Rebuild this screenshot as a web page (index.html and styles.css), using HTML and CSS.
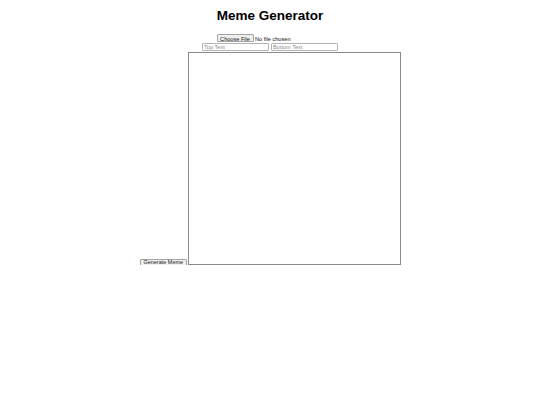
FILE: index.html
```html
<!DOCTYPE html>
<html lang="en">
<head>
<meta charset="utf-8">
<title>Meme Generator</title>
<link rel="stylesheet" href="styles.css">
</head>
<body class="app">
  <h1 class="title">Meme Generator</h1>
  <div class="row upload-row">
    <input type="file" class="file-input" accept="image/*">
  </div>
  <div class="row text-row">
    <input type="text" class="caption" placeholder="Top Text">
    <input type="text" class="caption" placeholder="Bottom Text">
  </div>
  <div class="row canvas-row">
    <button class="generate" type="button">Generate Meme</button>
    <canvas class="meme-canvas" width="211" height="211"></canvas>
  </div>
</body>
</html>
```
FILE: styles.css
```css
.app {
  margin: 0;
  font-family: "Liberation Sans", Arial, sans-serif;
  color: #000;
  background: #fff;
  display: flex;
  flex-direction: column;
  align-items: center;
}

.title {
  font-size: 13.5px;
  line-height: 16px;
  font-weight: bold;
  margin: 8.3px 0 0;
}

.row {
  display: flex;
  justify-content: center;
}

/* file picker */
.upload-row {
  margin-top: 9.7px;
  width: 106px;
  margin-left: -1px;
}

.file-input {
  font-family: "Liberation Sans", Arial, sans-serif;
  font-size: 5.6px;
  width: 106px;
  height: 8.3px;
  padding: 0;
  margin: 0;
  color: #111;
  line-height: 8.3px;
}

.file-input::file-selector-button {
  font: inherit;
  box-sizing: border-box;
  height: 8.3px;
  padding: 0 2.6px;
  margin: 0 1.5px 0 0;
  border: 1px solid #a4a4a4;
  border-radius: 1px;
  background: #efefef;
  color: #222;
}

/* caption inputs */
.text-row {
  margin-top: 0.3px;
  gap: 2px;
}

.caption {
  box-sizing: border-box;
  width: 67px;
  height: 8.6px;
  margin: 0;
  padding: 0 1px;
  border: 1px solid #b4b4b4;
  border-radius: 1px;
  font-family: "Liberation Sans", Arial, sans-serif;
  font-size: 5.6px;
  background: #fff;
}

.caption::placeholder {
  color: #8a8a8a;
}

/* generate button sits on the canvas baseline */
.canvas-row {
  margin-top: 0.6px;
  align-items: flex-end;
  gap: 1.5px;
  margin-left: 1px;
}

.generate {
  box-sizing: border-box;
  width: 46.5px;
  height: 7.6px;
  margin: 0 0 -1.8px;
  padding: 0;
  border: 1px solid #a4a4a4;
  border-radius: 1px;
  background: #efefef;
  color: #222;
  font-family: "Liberation Sans", Arial, sans-serif;
  font-size: 5.5px;
  line-height: 5px;
}

.meme-canvas {
  display: block;
  width: 211px;
  height: 211px;
  border: 1px solid #8a8a8a;
  background: #fff;
}
```
